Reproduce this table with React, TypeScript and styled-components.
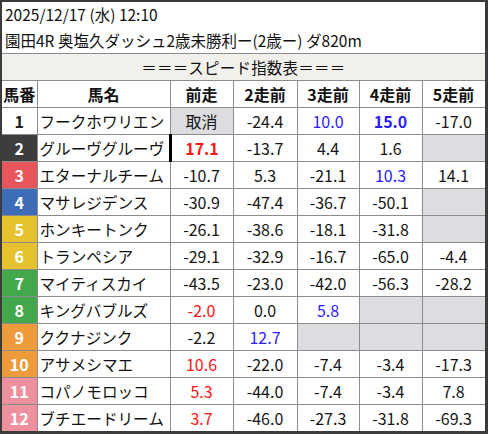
import styled, { createGlobalStyle } from "styled-components";

const GlobalStyle = createGlobalStyle`
  html, body {
    margin: 0;
    padding: 0;
    background: #ffffff;
  }
  body {
    font-family: "Noto Sans CJK JP", "Noto Sans", sans-serif;
    color: #111111;
  }
`;

const Frame = styled.div`
  width: 488px;
  height: 434px;
  box-sizing: border-box;
  border-style: solid;
  border-color: #3b3b3b;
  border-width: 2px 3px 3px 2px;
  background: #ffffff;
  overflow: hidden;
`;

const Info = styled.div`
  padding: 0 3px;
  font-size: 15.5px;
  line-height: 25.5px;
  white-space: nowrap;
`;

const Table = styled.table`
  width: 483px;
  border-collapse: collapse;
  table-layout: fixed;
  font-size: 16px;

  td,
  th {
    border: 1px solid #8c8c8c;
    height: 26px;
    padding: 0;
    line-height: 26px;
    text-align: center;
    white-space: nowrap;
    overflow: hidden;
  }

  tr > :first-child {
    border-left: none;
  }
`;

const TitleCell = styled.td`
  background: #f1f0eb;
  font-size: 15.5px;
  letter-spacing: 0.2px;
`;

const HeadCell = styled.th`
  font-weight: 700;
  background: #ffffff;
`;

const waku: Record<number, [string, string]> = {
  1: ["#ffffff", "#222222"],
  2: ["#3d3d3d", "#ffffff"],
  3: ["#e8555a", "#ffffff"],
  4: ["#3f6cb9", "#ffffff"],
  5: ["#e6c32e", "#ffffff"],
  6: ["#e6c32e", "#ffffff"],
  7: ["#43a84b", "#ffffff"],
  8: ["#43a84b", "#ffffff"],
  9: ["#ee9b3b", "#ffffff"],
  10: ["#ee9b3b", "#ffffff"],
  11: ["#ef909f", "#ffffff"],
  12: ["#ef909f", "#ffffff"],
};

const NumCell = styled.td<{ $no: number }>`
  font-weight: 700;
  background: ${(p) => waku[p.$no][0]};
  color: ${(p) => waku[p.$no][1]};
`;

const NameCell = styled.td`
  text-align: left !important;
  padding-left: 2px !important;
  font-size: 15.6px;
`;

type Tone = "plain" | "red" | "blue";

const ScoreCell = styled.td<{ $tone: Tone; $bold?: boolean; $empty?: boolean; $mark?: boolean }>`
  background: ${(p) => (p.$empty ? "#dcdce1" : "#ffffff")};
  color: ${(p) => (p.$tone === "red" ? "#ff1414" : p.$tone === "blue" ? "#2a1cff" : "#151515")};
  font-weight: ${(p) => (p.$bold ? 700 : 400)};
  ${(p) => (p.$mark ? "border-left: 3px solid #000000 !important;" : "")}
`;

type Score = {
  t?: string;
  tone?: Tone;
  bold?: boolean;
  empty?: boolean;
  mark?: boolean;
};

const s = (t: string, tone: Tone = "plain", bold = false): Score => ({ t, tone, bold });
const gray: Score = { empty: true };

const rows: { no: number; name: string; scores: Score[] }[] = [
  { no: 1, name: "フークホワリエン", scores: [{ t: "取消", empty: true }, s("-24.4"), s("10.0", "blue"), s("15.0", "blue", true), s("-17.0")] },
  { no: 2, name: "グルーヴグルーヴ", scores: [{ ...s("17.1", "red", true), mark: true }, s("-13.7"), s("4.4"), s("1.6"), gray] },
  { no: 3, name: "エターナルチーム", scores: [s("-10.7"), s("5.3"), s("-21.1"), s("10.3", "blue"), s("14.1")] },
  { no: 4, name: "マサレジデンス", scores: [s("-30.9"), s("-47.4"), s("-36.7"), s("-50.1"), gray] },
  { no: 5, name: "ホンキートンク", scores: [s("-26.1"), s("-38.6"), s("-18.1"), s("-31.8"), gray] },
  { no: 6, name: "トランペシア", scores: [s("-29.1"), s("-32.9"), s("-16.7"), s("-65.0"), s("-4.4")] },
  { no: 7, name: "マイティスカイ", scores: [s("-43.5"), s("-23.0"), s("-42.0"), s("-56.3"), s("-28.2")] },
  { no: 8, name: "キングバブルズ", scores: [s("-2.0", "red"), s("0.0"), s("5.8", "blue"), gray, gray] },
  { no: 9, name: "ククナジンク", scores: [s("-2.2"), s("12.7", "blue"), gray, gray, gray] },
  { no: 10, name: "アサメシマエ", scores: [s("10.6", "red"), s("-22.0"), s("-7.4"), s("-3.4"), s("-17.3")] },
  { no: 11, name: "コパノモロッコ", scores: [s("5.3", "red"), s("-44.0"), s("-7.4"), s("-3.4"), s("7.8")] },
  { no: 12, name: "ブチエードリーム", scores: [s("3.7", "red"), s("-46.0"), s("-27.3"), s("-31.8"), s("-69.3")] },
];

const colWidths = [35, 133, 63, 64, 62, 63, 63];
const heads = ["馬番", "馬名", "前走", "2走前", "3走前", "4走前", "5走前"];

export default function App() {
  return (
    <>
      <GlobalStyle />
      <Frame>
        <Info>2025/12/17 (水) 12:10</Info>
        <Info>園田4R 奥塩久ダッシュ2歳未勝利ー(2歳ー) ダ820m</Info>
        <Table>
          <colgroup>
            {colWidths.map((w, i) => (
              <col key={i} style={{ width: w }} />
            ))}
          </colgroup>
          <tbody>
            <tr>
              <TitleCell colSpan={7}>＝＝＝スピード指数表＝＝＝</TitleCell>
            </tr>
            <tr>
              {heads.map((h) => (
                <HeadCell key={h}>{h}</HeadCell>
              ))}
            </tr>
            {rows.map((row) => (
              <tr key={row.no}>
                <NumCell $no={row.no}>{row.no}</NumCell>
                <NameCell>{row.name}</NameCell>
                {row.scores.map((sc, i) => (
                  <ScoreCell
                    key={i}
                    $tone={sc.tone ?? "plain"}
                    $bold={sc.bold}
                    $empty={sc.empty}
                    $mark={sc.mark}
                  >
                    {sc.t ?? ""}
                  </ScoreCell>
                ))}
              </tr>
            ))}
          </tbody>
        </Table>
      </Frame>
    </>
  );
}
